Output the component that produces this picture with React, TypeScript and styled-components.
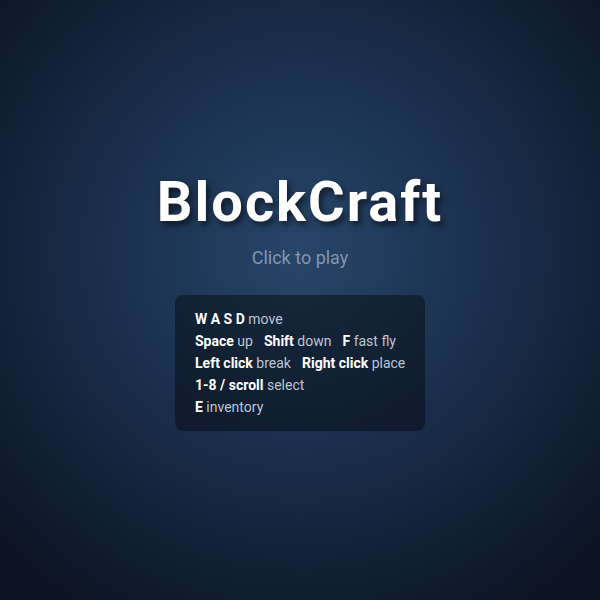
import React from "react";
import styled, { createGlobalStyle } from "styled-components";

const Global = createGlobalStyle`
  html, body { margin: 0; padding: 0; height: 100%; }
  body { font-family: Roboto, "Noto Sans", "Liberation Sans", sans-serif; }
  #root { height: 100%; }
`;

const Screen = styled.div`
  width: 600px;
  height: 600px;
  display: flex;
  flex-direction: column;
  align-items: center;
  justify-content: center;
  background: radial-gradient(ellipse 70% 70% at 50% 42%, #284669 0%, #1a2f4d 45%, #0b1422 100%);
  color: #fff;
  box-sizing: border-box;
`;

const Title = styled.h1`
  margin: 0;
  font-size: 56px;
  font-weight: 700;
  letter-spacing: 2px;
  line-height: 1.2;
  color: #fff;
  text-shadow: 3px 4px 6px rgba(0, 0, 0, 0.55);
`;

const Subtitle = styled.div`
  margin-top: 10px;
  font-size: 18px;
  color: #8296b0;
`;

const Panel = styled.div`
  margin-top: 27px;
  width: 250px;
  box-sizing: border-box;
  padding: 13px 20px;
  border-radius: 8px;
  background: rgba(0, 0, 0, 0.4);
  font-size: 14px;
  line-height: 22px;
  color: #bcc6d3;
`;

const Line = styled.div`
  display: flex;
  gap: 11px;
  white-space: nowrap;
`;

const Item = styled.span``;

const Key = styled.b`
  font-weight: 700;
  color: #fff;
`;

const rows: [string, string][][] = [
  [["W A S D", "move"]],
  [["Space", "up"], ["Shift", "down"], ["F", "fast fly"]],
  [["Left click", "break"], ["Right click", "place"]],
  [["1-8 / scroll", "select"]],
  [["E", "inventory"]],
];

export default function App() {
  return (
    <>
      <Global />
      <Screen>
        <Title>BlockCraft</Title>
        <Subtitle>Click to play</Subtitle>
        <Panel>
          {rows.map((r, i) => (
            <Line key={i}>
              {r.map(([k, d]) => (
                <Item key={k}>
                  <Key>{k}</Key> {d}
                </Item>
              ))}
            </Line>
          ))}
        </Panel>
      </Screen>
    </>
  );
}
